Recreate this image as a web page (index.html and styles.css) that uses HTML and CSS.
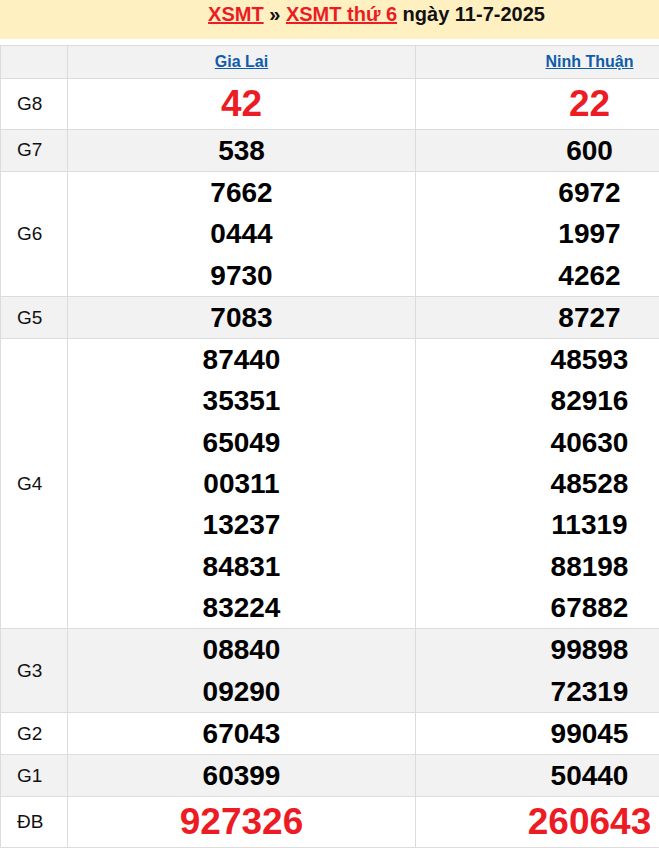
FILE: index.html
```html
<!DOCTYPE html>
<html lang="vi">
<head>
<meta charset="utf-8">
<title>XSMT thứ 6 ngày 11-7-2025</title>
<link rel="stylesheet" href="styles.css">
</head>
<body>
<div class="viewport">
<div class="page">
  <h2 class="title"><a href="#">XSMT</a> » <a href="#">XSMT thứ 6</a> ngày 11-7-2025</h2>
  <table class="results">
    <colgroup><col class="c-label"><col class="c-prov"><col class="c-prov"></colgroup>
    <thead>
      <tr class="alt">
        <th></th>
        <th><a href="#">Gia Lai</a></th>
        <th><a href="#">Ninh Thuận</a></th>
      </tr>
    </thead>
    <tbody>
      <tr>
        <td class="lbl">G8</td>
        <td class="big"><div>42</div></td>
        <td class="big"><div>22</div></td>
      </tr>
      <tr class="alt">
        <td class="lbl">G7</td>
        <td class="num"><div>538</div></td>
        <td class="num"><div>600</div></td>
      </tr>
      <tr>
        <td class="lbl">G6</td>
        <td class="num"><div>7662</div><div>0444</div><div>9730</div></td>
        <td class="num"><div>6972</div><div>1997</div><div>4262</div></td>
      </tr>
      <tr class="alt">
        <td class="lbl">G5</td>
        <td class="num"><div>7083</div></td>
        <td class="num"><div>8727</div></td>
      </tr>
      <tr>
        <td class="lbl">G4</td>
        <td class="num"><div>87440</div><div>35351</div><div>65049</div><div>00311</div><div>13237</div><div>84831</div><div>83224</div></td>
        <td class="num"><div>48593</div><div>82916</div><div>40630</div><div>48528</div><div>11319</div><div>88198</div><div>67882</div></td>
      </tr>
      <tr class="alt">
        <td class="lbl">G3</td>
        <td class="num"><div>08840</div><div>09290</div></td>
        <td class="num"><div>99898</div><div>72319</div></td>
      </tr>
      <tr>
        <td class="lbl">G2</td>
        <td class="num"><div>67043</div></td>
        <td class="num"><div>99045</div></td>
      </tr>
      <tr class="alt">
        <td class="lbl">G1</td>
        <td class="num"><div>60399</div></td>
        <td class="num"><div>50440</div></td>
      </tr>
      <tr>
        <td class="lbl">ĐB</td>
        <td class="big db"><div>927326</div></td>
        <td class="big db"><div>260643</div></td>
      </tr>
    </tbody>
  </table>
</div>
</div>
</body>
</html>
```

FILE: styles.css
```css
html, body {
  margin: 0;
  padding: 0;
  overflow-x: hidden;
  background: #fff;
}

body {
  font-family: "Liberation Sans", Arial, sans-serif;
  color: #111;
}

.viewport {
  width: 659px;
  overflow: hidden;
}

.page {
  width: 763px;
}

.title {
  width: 753px;
  margin: 0 0 6px;
  padding: 3px 0 13px;
  background: #fff0c2;
  text-align: center;
  font-size: 20px;
  line-height: 23px;
  font-weight: bold;
  color: #111;
}

.title a {
  color: #ec1c24;
  text-decoration: underline;
}

.results {
  width: 763px;
  table-layout: fixed;
  border-collapse: collapse;
}

.c-label { width: 67px; }
.c-prov { width: 348px; }

.results th,
.results td {
  border: 1px solid #dcdcdc;
  padding: 0;
}

.results tr.alt th,
.results tr.alt td {
  background: #f2f2f2;
}

.results th {
  height: 32px;
  text-align: center;
  font-size: 16px;
  font-weight: bold;
}

.results th a {
  color: #0f5ca9;
  text-decoration: underline;
}

.lbl {
  padding-left: 16px !important;
  font-size: 19px;
  text-align: left;
  color: #111;
}

.num {
  text-align: center;
  font-size: 28px;
  font-weight: bold;
  line-height: 41.3px;
  color: #000;
}

.big {
  text-align: center;
  font-size: 37px;
  font-weight: bold;
  line-height: 49.7px;
  color: #ec1c24;
}
```
